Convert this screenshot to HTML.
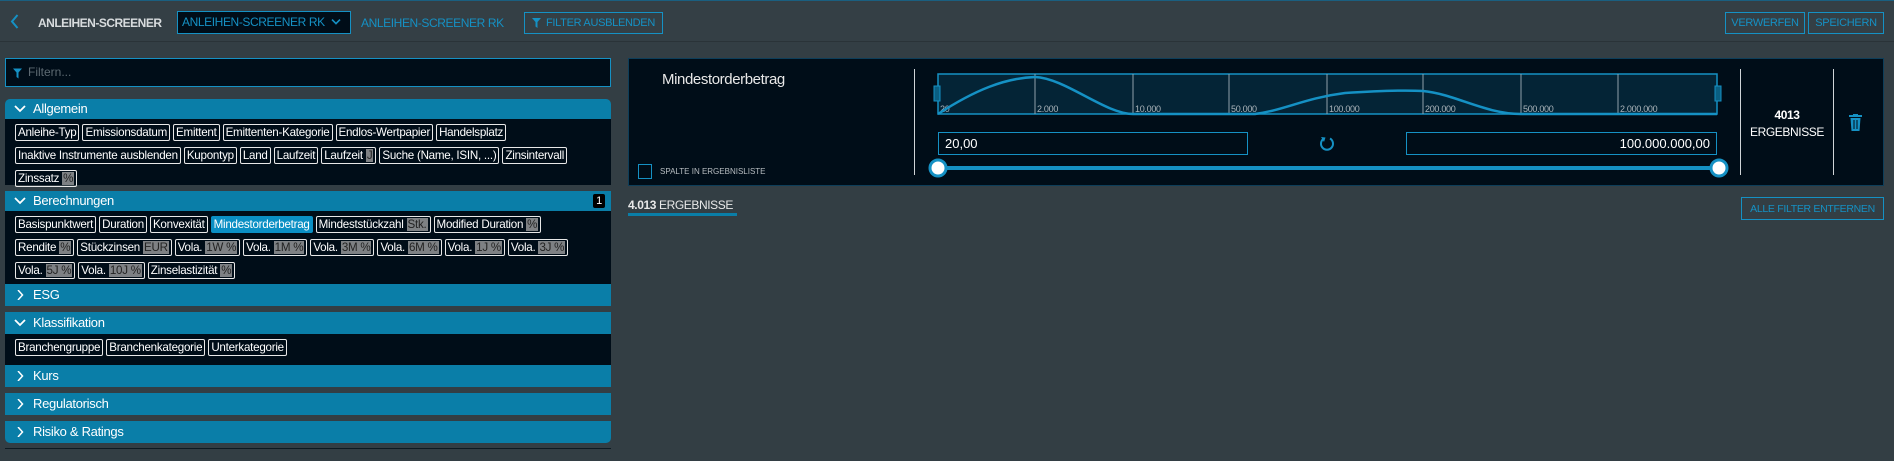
<!DOCTYPE html>
<html><head><meta charset="utf-8"><style>
*{box-sizing:border-box;margin:0;padding:0}
body{width:1894px;height:461px;background:#333e44;font-family:"Liberation Sans",sans-serif;color:#fff;position:relative;overflow:hidden}
.abs{position:absolute;white-space:nowrap}
.top{left:0;top:0;width:1894px;height:42px;background:#343f45;border-top:1px solid #1a5f80;border-bottom:1px solid #2a3338}
.btn{position:absolute;border:1px solid #1591c4;color:#1591c4;font-size:11px;letter-spacing:-0.3px;display:flex;align-items:center;justify-content:center;height:22px;white-space:nowrap}
.filter{position:absolute;left:5px;top:58px;width:606px;height:29px;background:#000d18;border:1px solid #1591c4;color:#5d6a72;font-size:12px;padding-left:22px;line-height:27px}
.hdr{position:absolute;left:5px;width:606px;height:20px;background:#0a7ea8;font-size:13px;line-height:20px;padding-left:28px;letter-spacing:-0.3px}
.hdr svg{position:absolute;left:9px;top:5px}
.body{position:absolute;left:5px;width:606px;background:#000d18;padding:5px 0 0 10px;display:flex;flex-wrap:wrap;gap:3px 3px;align-content:flex-start}
.br{width:100%;height:0}
.t{border:1px solid #e8e8e8;border-radius:2px;height:17px;font-size:11.6px;line-height:15px;padding:0 2px;white-space:nowrap;letter-spacing:-0.25px}
.t b{font-weight:normal;background:#7e8184;color:#222;padding:0 1px}
.t.sel{background:#0a8fc4;border-color:#0a8fc4}
</style></head><body>
<svg width="0" height="0" style="position:absolute"><defs>
<symbol id="dn" viewBox="0 0 12 10"><path d="M1 2L6 7L11 2" fill="none" stroke="#fff" stroke-width="1.8"/></symbol>
<symbol id="rt" viewBox="0 0 12 10"><path d="M4 0L8.5 5L4 10" fill="none" stroke="#fff" stroke-width="1.5"/></symbol>
</defs></svg>
<div class="abs top">
 <svg class="abs" style="left:10px;top:13px" width="9" height="15" viewBox="0 0 9 15"><path d="M7.5 1L2 7.5L7.5 14" fill="none" stroke="#1591c4" stroke-width="2"/></svg>
 <div class="abs" style="left:38px;top:15px;font-size:12px;font-weight:bold;color:#d8dcde;letter-spacing:-0.5px">ANLEIHEN-SCREENER</div>
 <div class="abs" style="left:177px;top:10px;width:174px;height:23px;background:#000d18;border:1px solid #1591c4;color:#1591c4;font-size:12px;letter-spacing:-0.4px;line-height:21px;padding-left:4px">ANLEIHEN-SCREENER RK <svg width="10" height="8" viewBox="0 0 12 10" style="margin-left:3px"><path d="M1 2L6 7L11 2" fill="none" stroke="#1591c4" stroke-width="2"/></svg></div>
 <div class="abs" style="left:361px;top:15px;color:#1591c4;font-size:12px;letter-spacing:-0.4px">ANLEIHEN-SCREENER RK</div>
 <div class="btn" style="left:524px;top:11px;width:139px"><svg width="9" height="10" viewBox="0 0 9 10" style="margin-right:5px"><path d="M0 0H9L5.5 4V10L3.5 8.5V4Z" fill="#1591c4"/></svg>FILTER AUSBLENDEN</div>
 <div class="btn" style="left:1725px;top:11px;width:80px">VERWERFEN</div>
 <div class="btn" style="left:1808px;top:11px;width:76px">SPEICHERN</div>
</div>
<div class="filter"><svg class="abs" style="left:7px;top:9px" width="9" height="11" viewBox="0 0 9 10"><path d="M0 0H9L5.5 4V10L3.5 8.5V4Z" fill="#1591c4"/></svg>Filtern...</div>

<div class="hdr" style="top:99px;border-radius:5px 5px 0 0"><svg width="12" height="10"><use href="#dn"/></svg>Allgemein</div>
<div class="body" style="top:119px;height:66px">
<span class="t">Anleihe-Typ</span><span class="t">Emissionsdatum</span><span class="t">Emittent</span><span class="t">Emittenten-Kategorie</span><span class="t">Endlos-Wertpapier</span><span class="t">Handelsplatz</span><div class="br"></div>
<span class="t">Inaktive Instrumente ausblenden</span><span class="t">Kupontyp</span><span class="t">Land</span><span class="t">Laufzeit</span><span class="t">Laufzeit <b>J</b></span><span class="t">Suche (Name, ISIN, ...)</span><span class="t">Zinsintervall</span><div class="br"></div>
<span class="t">Zinssatz <b>%</b></span>
</div>
<div class="hdr" style="top:191px"><svg width="12" height="10"><use href="#dn"/></svg>Berechnungen<span class="abs" style="right:6px;top:3px;background:#000;font-size:11px;line-height:14px;padding:0 3px;border-radius:2px">1</span></div>
<div class="body" style="top:211px;height:73px">
<span class="t">Basispunktwert</span><span class="t">Duration</span><span class="t">Konvexität</span><span class="t sel">Mindestorderbetrag</span><span class="t">Mindeststückzahl <b>Stk.</b></span><span class="t">Modified Duration <b>%</b></span><div class="br"></div>
<span class="t">Rendite <b>%</b></span><span class="t">Stückzinsen <b>EUR</b></span><span class="t">Vola. <b>1W %</b></span><span class="t">Vola. <b>1M %</b></span><span class="t">Vola. <b>3M %</b></span><span class="t">Vola. <b>6M %</b></span><span class="t">Vola. <b>1J %</b></span><span class="t">Vola. <b>3J %</b></span><div class="br"></div>
<span class="t">Vola. <b>5J %</b></span><span class="t">Vola. <b>10J %</b></span><span class="t">Zinselastizität <b>%</b></span>
</div>
<div class="hdr" style="top:284px;height:22px;line-height:22px"><svg width="12" height="10" style="top:6px"><use href="#rt"/></svg>ESG</div>
<div class="hdr" style="top:312px;height:22px;line-height:22px"><svg width="12" height="10" style="top:6px"><use href="#dn"/></svg>Klassifikation</div>
<div class="body" style="top:334px;height:31px">
<span class="t">Branchengruppe</span><span class="t">Branchenkategorie</span><span class="t">Unterkategorie</span>
</div>
<div class="hdr" style="top:365px;height:22px;line-height:22px"><svg width="12" height="10" style="top:6px"><use href="#rt"/></svg>Kurs</div>
<div class="hdr" style="top:393px;height:22px;line-height:22px"><svg width="12" height="10" style="top:6px"><use href="#rt"/></svg>Regulatorisch</div>
<div class="hdr" style="top:421px;height:22px;line-height:22px;border-radius:0 0 5px 5px"><svg width="12" height="10" style="top:6px"><use href="#rt"/></svg>Risiko &amp; Ratings</div>
<div class="abs" style="left:5px;top:448px;width:606px;height:1px;background:#0d1a22"></div>

<div class="abs" style="left:628px;top:58px;width:1256px;height:128px;background:#000d18;border:1px solid #0d3e5a"></div>
<div class="abs" style="left:662px;top:71px;font-size:15px;color:#e8e8e8;letter-spacing:-0.4px">Mindestorderbetrag</div>
<div class="abs" style="left:638px;top:164px;width:14px;height:15px;border:1px solid #1591c4"></div>
<div class="abs" style="left:660px;top:167px;font-size:8px;color:#b8bec2">SPALTE IN ERGEBNISLISTE</div>
<div class="abs" style="left:914px;top:69px;width:1px;height:106px;background:#cfd4d7"></div>
<div class="abs" style="left:1740px;top:69px;width:1px;height:106px;background:#cfd4d7"></div>
<div class="abs" style="left:1833px;top:69px;width:1px;height:106px;background:#cfd4d7"></div>
<svg class="abs" style="left:925px;top:70px" width="805" height="115">
<rect x="13" y="4" width="779" height="40" fill="#042436" stroke="#1591c4" stroke-width="1.5"/>
<g stroke="#8fa1ab" stroke-width="1"><line x1="110" y1="4" x2="110" y2="44"/><line x1="208" y1="4" x2="208" y2="44"/><line x1="304" y1="4" x2="304" y2="44"/><line x1="402" y1="4" x2="402" y2="44"/><line x1="498" y1="4" x2="498" y2="44"/><line x1="596" y1="4" x2="596" y2="44"/><line x1="693" y1="4" x2="693" y2="44"/></g>
<g fill="#aab4ba" font-size="9" letter-spacing="-0.3" font-family="Liberation Sans,sans-serif"><text x="15" y="42">20</text><text x="112" y="42">2.000</text><text x="210" y="42">10.000</text><text x="306" y="42">50.000</text><text x="404" y="42">100.000</text><text x="500" y="42">200.000</text><text x="598" y="42">500.000</text><text x="695" y="42">2.000.000</text></g>
<path d="M13 44C50 20 80 8 110 7C140 8 180 44 208 44L330 44C360 40 380 28 420 23C450 21 480 20 498 21C530 24 560 44 596 44L792 44" fill="none" stroke="#1591c4" stroke-width="2.5"/>
<rect x="9" y="16" width="6" height="15" fill="#0a5f82" stroke="#1591c4"/>
<rect x="790" y="16" width="6" height="15" fill="#0a5f82" stroke="#1591c4"/>
<line x1="13" y1="98" x2="794" y2="98" stroke="#1591c4" stroke-width="4"/>
<circle cx="13" cy="98" r="8" fill="#fff" stroke="#1591c4" stroke-width="3"/>
<circle cx="794" cy="98" r="8" fill="#fff" stroke="#1591c4" stroke-width="3"/>
</svg>
<div class="abs" style="left:938px;top:132px;width:310px;height:23px;border:1px solid #1591c4;font-size:13px;line-height:21px;padding-left:6px">20,00</div>
<div class="abs" style="left:1406px;top:132px;width:311px;height:23px;border:1px solid #1591c4;font-size:13px;line-height:21px;padding-right:6px;text-align:right">100.000.000,00</div>
<svg class="abs" style="left:1318px;top:135px" width="18" height="18" viewBox="0 0 18 18"><path d="M6 3.5A6 6 0 1 0 12 3.5" fill="none" stroke="#1591c4" stroke-width="2"/><path d="M3 2L7.5 2.5L6 7Z" fill="#1591c4"/></svg>
<div class="abs" style="left:1741px;top:107px;width:92px;text-align:center;font-size:12px;font-weight:bold;line-height:17px;letter-spacing:-0.4px">4013<br><span style="font-weight:normal">ERGEBNISSE</span></div>
<svg class="abs" style="left:1849px;top:114px" width="13" height="17" viewBox="0 0 13 17"><rect x="0" y="1" width="13" height="2" fill="#1591c4"/><rect x="4" y="0" width="5" height="2" fill="#1591c4"/><path d="M1.5 4H11.5L10.5 17H2.5Z" fill="#1591c4"/><g stroke="#000d18"><line x1="5" y1="6" x2="5" y2="15"/><line x1="8" y1="6" x2="8" y2="15"/></g></svg>
<div class="abs" style="left:628px;top:198px;font-size:12px;color:#e8e8e8;letter-spacing:-0.4px"><b>4.013</b> ERGEBNISSE</div>
<div class="abs" style="left:628px;top:213px;width:109px;height:3px;background:#0a7ea8"></div>
<div class="btn" style="left:1741px;top:197px;width:143px;height:23px;font-size:10.5px">ALLE FILTER ENTFERNEN</div>
</body></html>
